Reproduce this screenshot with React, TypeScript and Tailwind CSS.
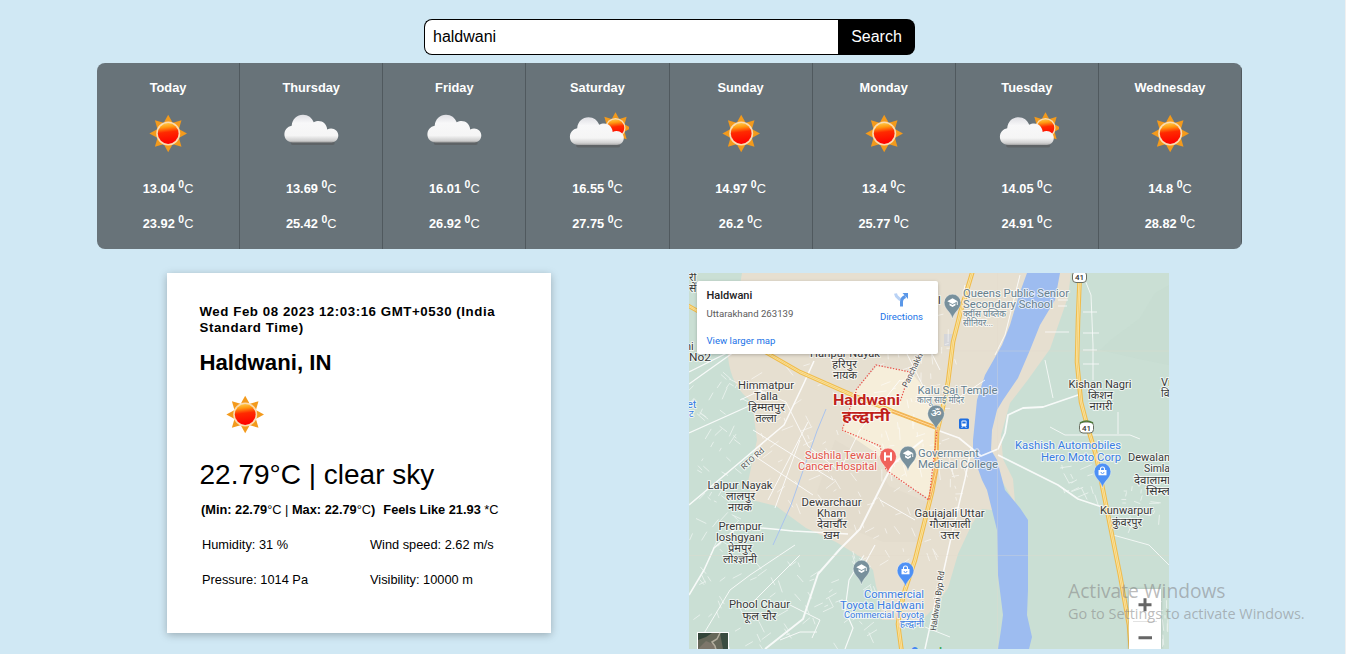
import React from "react";

type Sky = "clear" | "cloudy" | "partly";

const forecast: { day: string; sky: Sky; min: string; max: string }[] = [
  { day: "Today", sky: "clear", min: "13.04", max: "23.92" },
  { day: "Thursday", sky: "cloudy", min: "13.69", max: "25.42" },
  { day: "Friday", sky: "cloudy", min: "16.01", max: "26.92" },
  { day: "Saturday", sky: "partly", min: "16.55", max: "27.75" },
  { day: "Sunday", sky: "clear", min: "14.97", max: "26.2" },
  { day: "Monday", sky: "clear", min: "13.4", max: "25.77" },
  { day: "Tuesday", sky: "partly", min: "14.05", max: "24.91" },
  { day: "Wednesday", sky: "clear", min: "14.8", max: "28.82" },
];

function SunShape({ cx, cy, s = 1 }: { cx: number; cy: number; s?: number }) {
  return (
    <g transform={`translate(${cx} ${cy}) scale(${s})`}>
      {[0, 45, 90, 135, 180, 225, 270, 315].map((a) => (
        <path key={a} d="M-4.3 -11 L0 -18.8 L4.3 -11 Z" fill="#f39a1c" transform={`rotate(${a})`} />
      ))}
      <circle r="12" fill="#fbdcb0" />
      <circle r="10.4" fill="url(#sunFill)" />
    </g>
  );
}

function CloudShape() {
  return (
    <>
      <rect x="12" y="35" width="44" height="4" rx="2" fill="#5b5f61" opacity="0.8" />
      <path
        d="M14 36.5C9 36.5 5.7 33 5.7 28.6c0-4.600 3-8 7.300-8.800C13.500 13 18.300 8.800 24.300 8.800c5.200 0 9 3 10.700 7.500 1.500-.9 3.200-1.300 4.800-1.300 4.600 0 8.200 3.400 8.700 8.400 1.200-.5 2.500-.8 3.900-.8 4 0 7.200 3.200 7.200 7 0 4-3.200 6.900-6.800 6.900z"
        fill="url(#cloudFill)"
      />
    </>
  );
}

function WeatherIcon({ sky }: { sky: Sky }) {
  return (
    <svg width="64" height="50" viewBox="0 0 64 50" className="block">
      {sky === "clear" && <SunShape cx={32.2} cy={25.5} />}
      {sky === "cloudy" && (
        <g transform="translate(-0.300 -2)">
          <CloudShape />
        </g>
      )}
      {sky === "partly" && (
        <>
          <SunShape cx={50.5} cy={20} s={0.84} />
          <g transform="translate(-0.800 0.500)">
            <CloudShape />
          </g>
        </>
      )}
    </svg>
  );
}

function Gradients() {
  return (
    <svg width="0" height="0" className="absolute">
      <defs>
        <linearGradient id="sunFill" x1="0.3" y1="0" x2="0.42" y2="1">
          <stop offset="0" stopColor="#ffc94a" />
          <stop offset="0.2" stopColor="#ff9a12" />
          <stop offset="0.45" stopColor="#ff2a00" />
          <stop offset="1" stopColor="#fd0000" />
        </linearGradient>
        <linearGradient id="cloudFill" x1="0" y1="0" x2="0" y2="1">
          <stop offset="0" stopColor="#dfdfe4" />
          <stop offset="0.3" stopColor="#f8f8f9" />
          <stop offset="0.75" stopColor="#f5f5f5" />
          <stop offset="0.93" stopColor="#cfcfcf" />
          <stop offset="1" stopColor="#a2a2a2" />
        </linearGradient>
      </defs>
    </svg>
  );
}

function Degrees({ value }: { value: string }) {
  return (
    <p className="h-[35px] leading-[35px]">
      {value} <sup className="text-[10.400px] leading-none">0</sup>
      <span className="font-normal">C</span>
    </p>
  );
}

const INK = "#3a3a3a";
const SLATE = "#67818f";
const BLUE = "#3a7de3";
const RED = "#e35349";

/* [text, x, baseline, width, anchor, size, colour] in map coordinates */
type Label = [string, number, number, number, "start" | "middle" | "end", number, string];

const labels: Label[] = [
  ["री", 689, 281, 0, "start", 11, INK],
  ["सें", 689, 292, 0, "start", 11, INK],
  ["ni", 685, 350, 0, "start", 11, INK],
  ["No2", 689, 361, 22, "start", 11, INK],
  ["l", 938, 304, 0, "start", 11, INK],
  ["Haripur Nayak", 845, 357, 70, "middle", 11, INK],
  ["हरिपुर", 844.5, 368, 25, "middle", 10.5, INK],
  ["नायक", 845, 379, 24, "middle", 10.5, INK],
  ["Himmatpur", 766, 389, 56, "middle", 11, INK],
  ["Talla", 766, 400, 24, "middle", 11, INK],
  ["हिम्मतपुर", 766.5, 411, 37, "middle", 10.5, INK],
  ["तल्ला", 766, 422, 21, "middle", 10.5, INK],
  ["Lalpur Nayak", 740, 489, 65, "middle", 11, INK],
  ["लालपुर", 740.5, 500, 29, "middle", 10.5, INK],
  ["नायक", 740, 511, 24, "middle", 10.5, INK],
  ["Dewarchaur", 831.5, 506, 60, "middle", 11, INK],
  ["Kham", 831.5, 517, 29, "middle", 11, INK],
  ["देवार्चौर", 832, 528, 30, "middle", 10.5, INK],
  ["ख़म", 831.5, 539, 16, "middle", 10.5, INK],
  ["Prempur", 740, 530, 43, "middle", 11, INK],
  ["loshgyani", 740, 541, 48, "middle", 11, INK],
  ["प्रेमपुर", 740, 552, 24, "middle", 10.5, INK],
  ["लोश्ज्ञानी", 740, 563, 34, "middle", 10.5, INK],
  ["Phool Chaur", 759.5, 608, 61, "middle", 11, INK],
  ["फूल चौर", 759.5, 620, 34, "middle", 10.5, INK],
  ["Gaujajali Uttar", 949.5, 517, 70, "middle", 11, INK],
  ["गौजाजाली", 950, 527.5, 41, "middle", 10.5, INK],
  ["उत्तर", 950, 539, 19, "middle", 10.5, INK],
  ["Kishan Nagri", 1100, 388, 63, "middle", 11, INK],
  ["किशन", 1100.5, 399, 25, "middle", 10.5, INK],
  ["नागरी", 1101, 410, 23, "middle", 10.5, INK],
  ["Vi", 1161, 386, 0, "start", 11, INK],
  ["वि", 1161, 397, 0, "start", 10.5, INK],
  ["Dewalan", 1128, 461, 42, "start", 11, INK],
  ["Simla", 1144, 472, 26, "start", 11, INK],
  ["देवालामा", 1134, 484, 36, "start", 10.5, INK],
  ["सिम्ल", 1146, 495, 24, "start", 10.5, INK],
  ["Kunwarpur", 1126.5, 514, 53, "middle", 11, INK],
  ["कुंवरपुर", 1127, 525.5, 30, "middle", 10.5, INK],
  ["Queens Public Senior", 963, 296.5, 106, "start", 11, SLATE],
  ["Secondary School", 963, 307.5, 90, "start", 11, SLATE],
  ["क्वींस पब्लिक", 963, 317, 43, "start", 9, SLATE],
  ["सीनियर...", 963, 326, 30, "start", 9, SLATE],
  ["Kalu Sai Temple", 917.5, 394, 80, "start", 11, SLATE],
  ["कालू साई मंदिर", 917, 403, 47, "start", 9, SLATE],
  ["Government", 918, 456.5, 61, "start", 11, SLATE],
  ["Medical College", 918, 467.5, 80, "start", 11, SLATE],
  ["Sushila Tewari", 877, 458.5, 72, "end", 11, RED],
  ["Cancer Hospital", 877, 469.5, 79, "end", 11, RED],
  ["Kashish Automobiles", 1121, 449, 106, "end", 11, BLUE],
  ["Hero Moto Corp", 1121, 460.5, 80, "end", 11, BLUE],
  ["Commercial", 924, 597.5, 60, "end", 11, BLUE],
  ["Toyota Haldwani", 924, 608.5, 84, "end", 11, BLUE],
  ["Commercial Toyota", 924, 617.5, 80, "end", 9, BLUE],
  ["हल्द्वानी", 924, 626.5, 24, "end", 9, BLUE],
  ["et", 687, 407.5, 0, "start", 11, BLUE],
  ["ट", 689, 417, 0, "start", 9, BLUE],
];

function seeded(seed: number) {
  let s = seed;
  return () => {
    s = (s * 1103515245 + 12345) % 2147483648;
    return s / 2147483648;
  };
}

/* Short lanes scattered over the suburbs, aligned with the local street grid. */
function lanes(seed: number, n: number, x: number, y: number, w: number, h: number, tilt: number) {
  const r = seeded(seed);
  let d = "";
  for (let i = 0; i < n; i++) {
    const px = x + r() * w;
    const py = y + r() * h;
    const a = ((tilt + (r() > 0.5 ? 90 : 0) + r() * 24 - 12) * Math.PI) / 180;
    const l = 3 + r() * 10;
    d += `M${px.toFixed(1)} ${py.toFixed(1)}l${(Math.cos(a) * l).toFixed(1)} ${(Math.sin(a) * l).toFixed(1)}`;
  }
  return d;
}

function Pin({ x, y, fill, kind }: { x: number; y: number; fill: string; kind: "school" | "shop" | "hospital" | "om" }) {
  return (
    <g transform={`translate(${x} ${y})`}>
      <path d="M0 16.500C-1 9.500-8.300 7-8.300 0a8.300 8.300 0 0 1 16.600 0C8.300 7 1 9.500 0 16.500z" fill={fill} stroke="#fff" strokeOpacity="0.45" strokeWidth="0.7" />
      {kind === "school" && (
        <g fill="#fff">
          <path d="M-5.200-1.300 0-4.200 5.200-1.300 0 1.500z" />
          <path d="M-3 .8v2L0 4.400 3 2.800v-2L0 2.500zM4.300-1h.9v3.600h-.9z" />
        </g>
      )}
      {kind === "shop" && (
        <>
          <path d="M-4-1.500h8v5.300h-8z" fill="#fff" />
          <path d="M-2-1.500V-2.500a2 2 0 0 1 4 0v1" fill="none" stroke="#fff" strokeWidth="1.100" />
          <path d="M-1.500.5a1.500 1.500 0 0 0 3 0" fill="none" stroke={fill} strokeWidth="0.900" />
        </>
      )}
      {kind === "hospital" && <path d="M-3-4.200v8.400M3-4.200v8.400M-3 0h6" stroke="#fff" strokeWidth="2" fill="none" />}
      {kind === "om" && (
        <text y="3.500" textAnchor="middle" fontSize="11.500" fontWeight="500" fill="#fff">
          ॐ
        </text>
      )}
    </g>
  );
}

function Highway({ d, w = 4.6 }: { d: string; w?: number }) {
  return (
    <g fill="none" strokeLinejoin="round">
      <path d={d} stroke="#f0bc4c" strokeWidth={w} />
      <path d={d} stroke="#fbe6a4" strokeWidth={w - 2.2} />
      <path d={d} stroke="#f0c564" strokeWidth="0.7" />
    </g>
  );
}

function RouteShield({ x, y }: { x: number; y: number }) {
  return (
    <g>
      <rect x={x - 7} y={y - 5.5} width="14" height="11" rx="3.500" fill="#fff" stroke="#6a6f62" strokeWidth="1" />
      <text x={x} y={y + 3} textAnchor="middle" fontSize="8" fontWeight="500" fill="#333">
        41
      </text>
    </g>
  );
}

function MapCanvas() {
  return (
    <svg
      width="480"
      height="376"
      viewBox="689 273 480 376"
      className="block font-['Roboto','Noto_Sans_Devanagari','Noto_Sans',sans-serif]"
    >
      <rect x="689" y="273" width="480" height="376" fill="#cadfd4" />
      <path d="M1100 350c15-15 25-20 40-32l15-25 14-8v80l-30-6z" fill="#c6dbcf" opacity="0.5" />
      <path
        d="M742 273C736 310 727 335 728 357c2 20 10 35 24 45l5 38-9 42 4 18 24 6 30 22 30 14 26 16 11 12 3 16 4 14 2 20h40l12-12 14-20 10-34 14-30 10-15 19 2-12-26-3-40 4-60 34-80 18-50V273z"
        fill="#e6dfd0"
      />
      <path d="M1058 273h13l-3 24-18 52-23 32-17 22-9 32 2 24 10 20 2 24-12-20-14-33 3-40z" fill="#e6dfd0" />
      <path d="M877 366l34 6 10 12 15 28-1 50-7 36-40-25-12-20-34-23 12-38z" fill="#f6eeda" />
      <path d="M835 440l42 24 12 22 38 16-8 40-36 0-40-16-26-34z" fill="#e3dccd" />
      <rect x="944" y="334" width="10" height="12" fill="#d5d6d9" />
      <path
        d="M1027 273L1019 295L1010 325L1002 345L985 375L977 400L973 440V455L982 480L987 490L992 510L997 530L998 575L1003 615L1001 630L998 649H1029L1032 637L1027 615L1028 590V520L1020 508L1005 490L997 460L991 450L992 430L997 410L1003 400L1018 378L1030 350L1040 325L1055 300L1060 273Z"
        fill="#9dbcf0"
      />

      <g fill="none" stroke="#fff" strokeWidth="0.900" opacity="0.6">
        <path d={lanes(7, 55, 692, 372, 50, 190, 35)} />
        <path d={lanes(19, 70, 692, 560, 185, 86, 60)} />
        <path d={lanes(31, 40, 760, 360, 80, 150, 60)} />
        <path d={lanes(43, 60, 880, 300, 75, 170, 80)} />
        <path d={lanes(57, 36, 850, 470, 85, 100, 65)} />
        <path d={lanes(71, 18, 1060, 455, 35, 40, 70)} />
        <path d={lanes(83, 20, 1118, 450, 42, 75, 10)} />
        <path d={lanes(101, 14, 950, 455, 16, 60, 80)} />
        <path d={lanes(113, 10, 1162, 600, 6, 40, 80)} />
      </g>

      <g fill="none" stroke="#fff" strokeLinejoin="round" opacity="0.85">
        <path d="M689 384l45-32M689 433l60-27M689 372l50-25" strokeWidth="1.300" />
        <path d="M689 505l50-42 45-38 20-42 10-22" strokeWidth="1.600" />
        <path d="M689 595l15-25 10-22 25-22 34 3 20 2 55 3" strokeWidth="1.600" />
        <path d="M765 649l38-30 15-45 22-25 20-20 25-50 8-15 30-24" strokeWidth="2" />
        <path d="M740 400l30-14M740 382l46 20 22 44 30 24M753 430l80 50M753 455l60 40M768 500l40-78M800 440l-25 68" strokeWidth="1" />
        <path d="M840 470l20-40 40-50M866 440l30 20M920 330l20 40M880 500l35 20M900 340l40 80" strokeWidth="1" />
        <path d="M700 640l30-50 20-15 45-30M745 610l30-30 25-25" strokeWidth="1" />
        <path d="M780 640l20-8 17 0M790 605l30 15-8 18" strokeWidth="1" />
        <path d="M864 555l-15 25-4 30 8 18-8 21M875 545l-12 22" strokeWidth="1.200" />
        <path d="M937 430l22 8 22 18 17-7 7-16 3-18 15-7 20-1 38-13" strokeWidth="1.800" />
        <path d="M998 455l60 30 20 14 30 10" strokeWidth="1.800" />
        <path d="M971 449l-6 30-12 50-10 45-8 30-10 45" strokeWidth="1.500" />
        <path d="M1085 280l6 15 2 50 0 35M1045 360l8 38M1113 535l36 10 20 20M1050 427l15 8h65l10 4M1118 412v22" strokeWidth="0.900" />
        <path d="M965 285l-8 45M1020 275l-15 60-10 20M985 380l-30 20" strokeWidth="1" />
        <path d="M925 627l25 10M1083 312h14M1083 333h16M1083 350h14M1083 364h16M1045 332h24M1058 300h10M1058 306h9" strokeWidth="0.900" />
      </g>
      <path d="M826 409l-9 22-12 34-14 40-18 40" fill="none" stroke="#a9c3ee" strokeWidth="1" />
      <path d="M689 351h480M689 555.500h480M997.500 273v376" stroke="#e4dccd" strokeWidth="0.6" opacity="0.5" />

      <Highway d="M685 304l18 10 64 39 33 19 50 22 42 17 45 17" w={4.2} />
      <Highway d="M973 270l-12 40-8 32-5 40-7 34-4 16-1 38-4 22-7 28-10 40-10 30-5 20-2 14 4 30" />
      <Highway d="M1080 270l-2 50-1 42 4 40 6 23 9 30 8 40 7 35 9 45 9 50 2 26" />
      <path d="M892 411l45 17-1 44-5 20-2 8" fill="none" stroke="#f3a958" strokeWidth="2.800" />
      <path d="M892 411l45 17-1 44-5 20-2 8" fill="none" stroke="#ffe49a" strokeWidth="1" />

      <path
        d="M856 390l20-25 34 7-10 30M856 392l-14 38 38 16 6 24 43 30 8-70"
        fill="none"
        stroke="#ea4b45"
        strokeWidth="1.200"
        strokeDasharray="1.300 1.600"
      />

      <g paintOrder="stroke" stroke="#fff" strokeOpacity="0.7" strokeWidth="2" strokeLinejoin="round">
        {labels.map(([t, x, y, w, anchor, size, fill]) => (
          <text
            key={`${t}-${x}-${y}`}
            x={x}
            y={y}
            fontSize={size}
            fill={fill}
            textAnchor={anchor}
            textLength={w || undefined}
            lengthAdjust="spacingAndGlyphs"
          >
            {t}
          </text>
        ))}
        <text x="866.500" y="405" textAnchor="middle" fontSize="15.500" fontWeight="bold" fill="#c01f1b" textLength="67" lengthAdjust="spacingAndGlyphs">
          Haldwani
        </text>
        <text x="866" y="421" textAnchor="middle" fontSize="15" fontWeight="bold" fill="#c01f1b" textLength="48" lengthAdjust="spacingAndGlyphs">
          हल्द्वानी
        </text>
        <text transform="translate(744 470) rotate(-42)" fontSize="8" fill="#555" textLength="28" lengthAdjust="spacingAndGlyphs">
          RTO Rd
        </text>
        <text transform="translate(907 388) rotate(-64)" fontSize="8.500" fill="#555" textLength="37" lengthAdjust="spacingAndGlyphs">
          Panchakki
        </text>
        <text transform="translate(936 631) rotate(-82)" fontSize="8.500" fill="#444" textLength="60" lengthAdjust="spacingAndGlyphs">
          Haldwani Byp Rd
        </text>
      </g>

      <Pin x={952.5} y={302.5} fill="#78909c" kind="school" />
      <Pin x={936} y={413.5} fill="#78909c" kind="om" />
      <Pin x={908} y={454.5} fill="#78909c" kind="school" />
      <Pin x={861.5} y={568.5} fill="#78909c" kind="school" />
      <Pin x={888} y={456.5} fill="#f0625b" kind="hospital" />
      <Pin x={1102.5} y={471.5} fill="#4d90f5" kind="shop" />
      <Pin x={905.5} y={570.5} fill="#4d90f5" kind="shop" />
      <RouteShield x={1079.5} y={277} />
      <RouteShield x={1086.5} y={427.5} />
      <path d="M1080 423c2-1 4-2 6.500-2s4.500 1 6.500 2" stroke="#4f7a3a" strokeWidth="1.500" fill="none" />

      <g>
        <rect x="959" y="418.500" width="10" height="10.500" rx="1.500" fill="#1f6ee0" />
        <rect x="961.500" y="420.500" width="5" height="6" rx="1" fill="#fff" />
        <path d="M962.300 421.500h3.400v2h-3.400z" fill="#1f6ee0" />
        <path d="M962.500 426.500l-.8 1.500M965.500 426.500l.8 1.500" stroke="#fff" strokeWidth="0.8" />
      </g>

      <text x="910.500" y="658.500" fontSize="16" fontWeight="500" textLength="38" lengthAdjust="spacingAndGlyphs">
        <tspan fill="#4285f4">G</tspan>
        <tspan fill="#ea4335">o</tspan>
        <tspan fill="#fbbc05">o</tspan>
        <tspan fill="#4285f4">g</tspan>
        <tspan fill="#34a853">l</tspan>
        <tspan fill="#ea4335">e</tspan>
      </text>

      <g>
        <rect x="697" y="632" width="32" height="20" fill="#fff" />
        <rect x="698" y="633" width="30" height="18" fill="#66685a" />
        <path d="M698 633h14l-6 4-8 3z" fill="#33453a" />
        <path d="M720 633h8v16h-5z" fill="#3a4c40" />
        <path d="M698 649l8-8 7 3 4 5z" fill="#7d766a" />
        <path d="M720 633l-3 6-5 3 3 4 1 4" fill="none" stroke="#b3ae9e" strokeWidth="1.500" />
      </g>
    </svg>
  );
}

function MapCard() {
  return (
    <div className="absolute left-2 top-2 flex h-[73px] w-[241px] justify-between rounded-[2px] bg-white pl-[9.500px] pr-[15px] font-['Roboto',sans-serif] shadow-[0_1px_4px_-1px_rgba(0,0,0,0.35)]">
      <div className="pt-2">
        <p className="text-[11px] font-medium leading-[14px] text-[#222]">Haldwani</p>
        <p className="mt-[5px] text-[9.600px] leading-3 text-[#5b5b5b]">Uttarakhand 263139</p>
        <p className="mt-[15px] text-[9.600px] leading-3 text-[#1a73e8]">View larger map</p>
      </div>
      <div className="flex flex-col items-center pt-[11px]">
        <svg width="15" height="15" viewBox="0 0 15 15" fill="none">
          <path d="M1.500 1.500c.5 4 3 4 5 6.500" stroke="#b9d2f5" strokeWidth="3" />
          <path d="M7.500 14.500V10c0-3 1-4.500 4-5.500" stroke="#5a97e8" strokeWidth="3" />
          <path d="M8.500 1H14v6z" fill="#5a97e8" />
        </svg>
        <p className="mt-[3.500px] text-[9.600px] leading-3 text-[#1a73e8]">Directions</p>
      </div>
    </div>
  );
}

function ZoomControl() {
  return (
    <div className="absolute bottom-0 right-2 flex h-[60px] w-8 flex-col items-center bg-white shadow-[0_0_3px_rgba(0,0,0,0.2)]">
      <svg width="32" height="60" viewBox="0 0 32 60">
        <path d="M9.500 15.800h13M16 9.300v13M9.500 48.800h13.500" stroke="#666" strokeWidth="3" fill="none" />
        <path d="M4 32.500h24" stroke="#e2e2e2" strokeWidth="1" />
      </svg>
    </div>
  );
}

export default function App() {
  return (
    <div className="relative flex h-[654px] w-[1346px] flex-col overflow-hidden border-r border-[#f0f0f0] bg-[#d0e8f4] font-['Liberation_Sans',Arial,sans-serif] text-black">
      <Gradients />

      <form className="ml-[424px] mt-[19px] flex h-9 w-[491px] shrink-0" onSubmit={(e) => e.preventDefault()}>
        <input
          className="w-[414px] rounded-l-lg border border-r-0 border-black bg-white pl-2 text-base outline-none"
          defaultValue="haldwani"
        />
        <button className="w-[77px] rounded-r-lg bg-black text-base text-white">Search</button>
      </form>

      <section className="ml-[97px] mt-2 grid h-[186px] w-[1145px] shrink-0 grid-cols-8 overflow-hidden rounded-lg bg-[#687379] text-center text-[12.800px] font-bold text-white">
        {forecast.map((f) => (
          <div key={f.day} className="flex flex-col items-center border-r border-[#50595e] pt-[15px]">
            <p className="h-5 leading-5">{f.day}</p>
            <div className="mb-[13px] mt-[10px]">
              <WeatherIcon sky={f.sky} />
            </div>
            <Degrees value={f.min} />
            <Degrees value={f.max} />
          </div>
        ))}
      </section>

      <main className="mt-6 flex items-start">
        <section className="ml-[167px] flex h-[360px] w-[384px] flex-col bg-white pl-[32.500px] pr-8 pt-[31px] shadow-[0_2px_8px_rgba(0,0,0,0.26)]">
          <p className="whitespace-nowrap text-[13.300px] font-bold leading-4 tracking-[0.550px]">
            Wed Feb 08 2023 12:03:16 GMT+0530 (India
            <br />
            Standard Time)
          </p>
          <h1 className="mt-[14px] text-[22.200px] font-bold leading-[26px]">Haldwani, IN</h1>
          <div className="ml-[13.500px] mt-[13px] h-[50px]">
            <WeatherIcon sky="clear" />
          </div>
          <p className="mt-[20px] text-[28px] leading-8">22.79°C | clear sky</p>
          <div className="mt-[11px] flex gap-2 pl-[1.500px] text-[12.800px] font-bold leading-4">
            <p>
              (Min: 22.79<span className="font-normal">°C |</span> Max: 22.79<span className="font-normal">°C</span>)
            </p>
            <p>
              Feels Like 21.93 <span className="font-normal">*C</span>
            </p>
          </div>
          <div className="mt-[19px] grid grid-cols-[168px_1fr] gap-y-[19px] pl-[2.500px] text-[12.800px] leading-4">
            <p>Humidity: 31 %</p>
            <p>Wind speed: 2.62 m/s</p>
            <p>Pressure: 1014 Pa</p>
            <p>Visibility: 10000 m</p>
          </div>
        </section>

        <section className="relative ml-[138px] h-[376px] w-[480px] overflow-hidden">
          <MapCanvas />
          <MapCard />
          <ZoomControl />
        </section>
      </main>

      <div className="absolute left-[1068px] top-[579px] whitespace-nowrap font-['Open_Sans','Noto_Sans',sans-serif] text-[rgba(130,130,130,0.55)]">
        <p className="text-[19.200px] leading-6">Activate Windows</p>
        <p className="mt-[1px] text-[14.450px] leading-5">Go to Settings to activate Windows.</p>
      </div>
    </div>
  );
}
